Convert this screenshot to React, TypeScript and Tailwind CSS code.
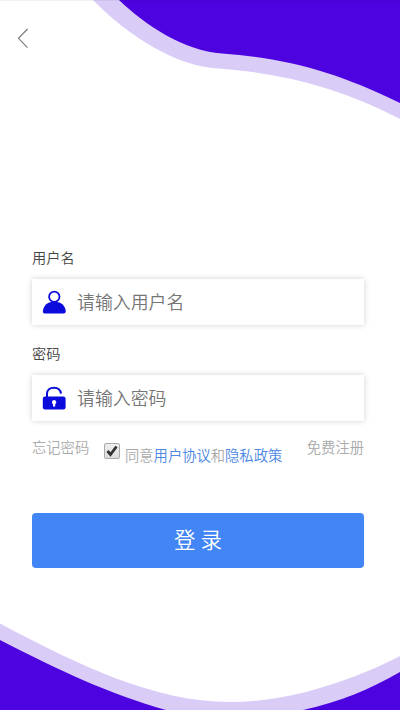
import React from "react";

function Waves() {
  return (
    <svg className="pointer-events-none absolute inset-0" width="400" height="710" viewBox="0 0 400 710" aria-hidden="true">
      <path fill="#d9cdf8" d="M93 0C130 38 178 66.500 218 68.500C285 73 345 90 400 119V0Z" />
      <path fill="#4c03df" d="M119 0C145 25 184 51 222 53.500C285 58 335 71 400 103V0Z" />
      <path fill="#d9cdf8" d="M0 623.500C80 666 155 702 230 702C285 702 345 684 400 656V710H0Z" />
      <path fill="#4c03df" d="M0 640C60 671 110 694 166 710H0Z" />
      <path fill="#4c03df" d="M303 710C340 702 370 689 400 672V710Z" />
    </svg>
  );
}

function UserIcon() {
  return (
    <svg width="24" height="24" viewBox="0 0 24 24" className="shrink-0">
      <path fill="#0b0bdc" d="M6.500 12.800Q12.300 10.500 18.100 12.800C21.500 14.500 23.400 17.500 23.800 21Q23.800 23.600 21.500 23.600H3.200Q.8 23.600.9 21C1.200 17.500 3.100 14.500 6.500 12.800Z" />
      <circle cx="12.300" cy="6.800" r="5.200" fill="#fff" stroke="#0b0bdc" strokeWidth="1.800" />
    </svg>
  );
}

function LockIcon() {
  return (
    <svg width="24" height="24" viewBox="0 0 24 24" className="shrink-0">
      <path fill="none" stroke="#0b0bdc" strokeWidth="2" d="M5 12V7.800C5 4 8 1.700 12 1.700C15.800 1.700 18.500 4 19 7.600" />
      <rect x=".8" y="10.500" width="22.800" height="13" rx="2.300" fill="#0b0bdc" />
      <path fill="#fff" d="M12.100 14a2.200 2.200 0 0 1 1.100 4.100V20.500h-2.200v-2.400a2.200 2.200 0 0 1 1.100-4.100Z" />
    </svg>
  );
}

function Field({ label, hint, type, children }: { label: string; hint: string; type: string; children: React.ReactNode }) {
  return (
    <label className="block h-24">
      <span className="block h-8 text-[14.200px] leading-5 text-[#444]">{label}</span>
      <span className="flex h-[46px] items-center gap-[11px] bg-white pl-[10px] shadow-[0_0_6px_rgba(0,0,0,0.18)]">
        {children}
        <input
          type={type}
          placeholder={hint}
          className="min-w-0 flex-1 bg-transparent pb-0.5 text-[17.900px] leading-6 outline-none placeholder:text-[#757575]"
        />
      </span>
    </label>
  );
}

export default function App() {
  return (
    <main className="relative h-[710px] w-[400px] overflow-hidden bg-white font-['Noto_Sans_CJK_SC',sans-serif] font-[350]">
      <Waves />
      <div className="relative flex h-full flex-col border-t border-black/5">
        <header className="h-[246px] pt-[27px] pl-[17px]">
          <svg width="12" height="21" viewBox="0 0 12 21" fill="none" stroke="#777" strokeWidth="1.100">
            <path d="M10.500 1L1.500 10.300L10.500 19.600" />
          </svg>
        </header>
        <form className="pr-9 pl-8" onSubmit={(e) => e.preventDefault()}>
          <Field label="用户名" hint="请输入用户名" type="text">
            <UserIcon />
          </Field>
          <Field label="密码" hint="请输入密码" type="password">
            <LockIcon />
          </Field>
          <div className="flex h-[74px] items-start text-[14.300px] leading-5 text-[#aaa]">
            <a className="-mt-0.5 w-[57px] whitespace-nowrap">忘记密码</a>
            <span className="mt-[4px] ml-[15px] flex h-4 w-4 shrink-0 items-center justify-center rounded-[2px] border border-[#aaa] bg-linear-to-b from-[#eee] to-[#ddd]">
              <svg width="14" height="14" viewBox="0 0 14 14" fill="none" stroke="#333" strokeWidth="2.800">
                <path d="M2.500 7L5.500 10.500L11.500 2.500" />
              </svg>
            </span>
            <p className="mt-1.5 ml-[5px] whitespace-nowrap">
              同意<a className="text-[#4b87e3]">用户协议</a>和<a className="text-[#4b87e3]">隐私政策</a>
            </p>
            <a className="-mt-0.5 ml-auto whitespace-nowrap">免费注册</a>
          </div>
          <button className="flex h-[55px] w-full items-center justify-center rounded-[4px] bg-[#4285f4] pb-0.5 text-[21.500px] text-white">
            登&nbsp;录
          </button>
        </form>
      </div>
    </main>
  );
}
